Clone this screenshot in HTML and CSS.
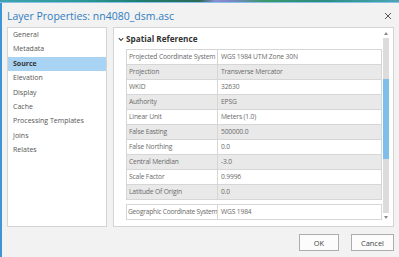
FILE: index.html
```html
<!DOCTYPE html>
<html>
<head>
<meta charset="utf-8">
<link rel="stylesheet" href="styles.css">
</head>
<body>
<div class="strip"></div>
<div class="window">
  <div class="titlebar">
    <div class="title">Layer Properties: nn4080_dsm.asc</div>
    <svg class="close" width="8" height="8" viewBox="0 0 8 8"><path d="M1 1 L7 7 M7 1 L1 7" stroke="#555" stroke-width="1"/></svg>
  </div>
  <div class="main">
    <div class="nav">
      <div class="nav-item">General</div>
      <div class="nav-item">Metadata</div>
      <div class="nav-item selected">Source</div>
      <div class="nav-item">Elevation</div>
      <div class="nav-item">Display</div>
      <div class="nav-item">Cache</div>
      <div class="nav-item">Processing Templates</div>
      <div class="nav-item">Joins</div>
      <div class="nav-item">Relates</div>
    </div>
    <div class="panel">
      <div class="scroll">
        <div class="section-head">
          <svg class="chev" width="6" height="5" viewBox="0 0 6 5"><path d="M0.8 1.2 L3 3.4 L5.2 1.2" fill="none" stroke="#444" stroke-width="1.1"/></svg>
          <span>Spatial Reference</span>
        </div>
        <div class="table">
          <div class="row"><div class="k">Projected Coordinate System</div><div class="v">WGS 1984 UTM Zone 30N</div></div>
          <div class="row alt"><div class="k">Projection</div><div class="v">Transverse Mercator</div></div>
          <div class="row"><div class="k">WKID</div><div class="v">32630</div></div>
          <div class="row alt"><div class="k">Authority</div><div class="v">EPSG</div></div>
          <div class="row"><div class="k">Linear Unit</div><div class="v">Meters (1.0)</div></div>
          <div class="row alt"><div class="k">False Easting</div><div class="v">500000.0</div></div>
          <div class="row"><div class="k">False Northing</div><div class="v">0.0</div></div>
          <div class="row alt"><div class="k">Central Meridian</div><div class="v">-3.0</div></div>
          <div class="row"><div class="k">Scale Factor</div><div class="v">0.9996</div></div>
          <div class="row alt"><div class="k">Latitude Of Origin</div><div class="v">0.0</div></div>
        </div>
        <div class="table gcs">
          <div class="row"><div class="k">Geographic Coordinate System</div><div class="v">WGS 1984</div></div>
          <div class="row"><div class="k">&nbsp;</div><div class="v">&nbsp;</div></div>
        </div>
      </div>
      <div class="scrollbar">
        <div class="arrow up"></div>
        <div class="track"><div class="thumb"></div></div>
        <div class="arrow down"></div>
      </div>
    </div>
  </div>
  <div class="footer">
    <div class="btn ok">OK</div>
    <div class="btn cancel">Cancel</div>
  </div>
</div>
</body>
</html>
```

FILE: styles.css
```css
html, body {
  margin: 0;
  padding: 0;
  width: 399px;
  height: 257px;
  overflow: hidden;
  background: #f2f2f2;
  font-family: "Open Sans", "Noto Sans", sans-serif;
}
.strip {
  height: 2px;
  background: linear-gradient(90deg, #3ea3b0 0%, #2a9a96 20%, #1d7d70 35%, #2a6a55 50%, #8b8fd6 54%, #7a86c8 58%, #3c9a6a 66%, #2b8c80 80%, #4aa6b6 100%);
  border-bottom: 1px solid #8cc0e6;
}
.window {
  border-left: 2px solid #3d95d5;
  height: 254px;
  box-sizing: border-box;
  padding: 0 5px 0 5px;
  display: flex;
  flex-direction: column;
}
.titlebar {
  height: 24px;
  display: flex;
  align-items: center;
  justify-content: space-between;
}
.title {
  color: #2f7cc0;
  font-size: 10.5px;
  padding-top: 1px;
}
.close {
  margin-right: 2px;
  margin-top: 2px;
}
.main {
  display: flex;
  gap: 6px;
  height: 200px;
}
.nav {
  width: 100px;
  box-sizing: border-box;
  background: #fff;
  border: 1px solid #d4d4d4;
  display: flex;
  flex-direction: column;
}
.nav-item {
  height: 14.4px;
  line-height: 14.4px;
  font-size: 7px;
  color: #555;
  padding-left: 5px;
  white-space: nowrap;
}
.nav-item.selected {
  background: #a8d3f3;
  font-weight: 700;
  color: #333;
}
.panel {
  width: 281px;
  box-sizing: border-box;
  background: #fff;
  border: 1px solid #d4d4d4;
  display: flex;
  padding-bottom: 6px;
}
.scroll {
  flex: 1;
  overflow: hidden;
  padding-left: 4px;
  padding-right: 1px;
}
.section-head {
  height: 21px;
  display: flex;
  align-items: center;
  gap: 2px;
  font-size: 8.2px;
  font-weight: 700;
  color: #333;
}
.chev {
  margin-top: 1px;
}
.table {
  margin-left: 8px;
  border: 1px solid #d6d6d6;
  border-bottom: none;
}
.row {
  display: grid;
  grid-template-columns: 91px 1fr;
  height: 15px;
  box-sizing: border-box;
  border-bottom: 1px solid #d6d6d6;
  font-size: 6.7px;
  letter-spacing: -0.15px;
  color: #6a6a6a;
  background: #fff;
}
.row.alt {
  background: #e9e9e9;
}
.k, .v {
  line-height: 14px;
  padding-left: 3px;
  white-space: nowrap;
  overflow: hidden;
}
.k {
  padding-left: 2px;
  border-right: 1px solid #d6d6d6;
}
.gcs {
  margin-top: 4px;
}
.gcs .k {
  letter-spacing: -0.25px;
  padding-left: 1px;
}
.scrollbar {
  width: 6px;
  margin-right: 4px;
  display: flex;
  flex-direction: column;
  align-items: center;
}
.arrow {
  width: 0;
  height: 0;
  border-left: 2.5px solid transparent;
  border-right: 2.5px solid transparent;
}
.arrow.up {
  margin-top: 4px;
  border-bottom: 3px solid #8a8a8a;
}
.arrow.down {
  margin-top: 3px;
  border-top: 3px solid #8a8a8a;
}
.track {
  width: 6px;
  margin-top: 3px;
  height: 175px;
  background: #dcdcdc;
  position: relative;
}
.thumb {
  position: absolute;
  left: 0;
  right: 0;
  top: 41px;
  height: 80px;
  background: #7dbfea;
}
.footer {
  flex: 1;
  display: flex;
  justify-content: flex-end;
  align-items: flex-start;
  gap: 12px;
  padding-top: 7px;
}
.btn {
  height: 17px;
  box-sizing: border-box;
  border: 1px solid #adadad;
  background: #fcfcfc;
  font-size: 7.4px;
  color: #444;
  display: flex;
  align-items: center;
  justify-content: center;
}
.ok { width: 40px; }
.cancel { width: 43px; }
```
